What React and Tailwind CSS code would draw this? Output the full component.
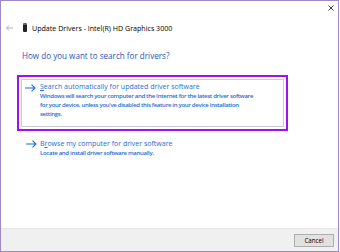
function Arrow({ className }) {
  return (
    <svg width="11" height="8" viewBox="0 0 11 8" className={className}>
      <path d="M0 4 H10 M6.5 0.7 L10 4 L6.5 7.3" stroke="#1a6fd6" strokeWidth="1.1" fill="none" />
    </svg>
  );
}

export default function App() {
  const font = { fontFamily: '"Open Sans", "Noto Sans", sans-serif' };

  return (
    <div className="w-[340px] h-[252px] bg-white overflow-hidden" style={font}>
      <div className="w-[339px] h-[252px] border border-[#9c8ac6] bg-white flex flex-col">
        {/* Close */}
        <div className="h-[15px] flex justify-end pr-[4px] pt-[4px] shrink-0">
          <svg width="6" height="6" viewBox="0 0 6 6" className="block">
            <path d="M0.5 0.5 L5.5 5.5 M5.5 0.5 L0.5 5.5" stroke="#333" strokeWidth="1" />
          </svg>
        </div>

        {/* Title row */}
        <div className="flex items-center h-[23px] pl-[5px] shrink-0">
          <svg width="7" height="6" viewBox="0 0 7 6" className="block">
            <path d="M3 0.5 L0.5 3 L3 5.5 M0.5 3 H7" stroke="#aaa" strokeWidth="0.9" fill="none" />
          </svg>
          <div className="ml-[10px] w-[4px] h-[9px] bg-[#222] rounded-[1px] border-t-[2px] border-[#666]" />
          <span className="ml-[5px] text-[7.1px] leading-[10px] text-black whitespace-nowrap">
            Update Drivers - Intel(R) HD Graphics 3000
          </span>
        </div>

        <div className="pl-[21px] mt-[11px] text-[8.1px] leading-[12px] text-[#1f55b8] whitespace-nowrap shrink-0">
          How do you want to search for drivers?
        </div>

        {/* Option 1 (highlighted) */}
        <div className="ml-[16px] mt-[13px] w-[271px] h-[56px] border-2 border-[#a010f0] p-[2px] shrink-0">
          <div className="h-full border border-[#c9cdd3] bg-white flex pl-[3px] pt-[1px]">
            <Arrow className="block mt-[3px] shrink-0" />
            <div className="ml-[4px]">
              <div className="text-[7px] leading-[11px] text-[#1a6fd6] whitespace-nowrap">
                <span className="underline">S</span>earch automatically for updated driver software
              </div>
              <div className="text-[6px] leading-[9px] text-[#1a6fd6] font-semibold tracking-[-0.3px] whitespace-nowrap">
                Windows will search your computer and the Internet for the latest driver software
                <br />
                for your device, unless you've disabled this feature in your device installation
                <br />
                settings.
              </div>
            </div>
          </div>
        </div>

        {/* Option 2 */}
        <div className="flex ml-[25px] mt-[7px] shrink-0">
          <Arrow className="block mt-[2px] shrink-0" />
          <div className="ml-[3px]">
            <div className="text-[7px] leading-[11px] text-[#1a6fd6] whitespace-nowrap">
              B<span className="underline">r</span>owse my computer for driver software
            </div>
            <div className="text-[6px] leading-[9px] text-[#1a6fd6] font-semibold tracking-[-0.3px] whitespace-nowrap">
              Locate and install driver software manually.
            </div>
          </div>
        </div>

        <div className="flex-1" />

        {/* Footer */}
        <div className="h-[23px] bg-[#f0f0f0] border-t border-[#e6e6e6] flex items-center justify-end pr-[4px] shrink-0">
          <button className="w-[40px] h-[13px] bg-[#e1e1e1] border border-[#adadad] text-[6.2px] leading-[11px] text-black">
            Cancel
          </button>
        </div>
      </div>
    </div>
  );
}
